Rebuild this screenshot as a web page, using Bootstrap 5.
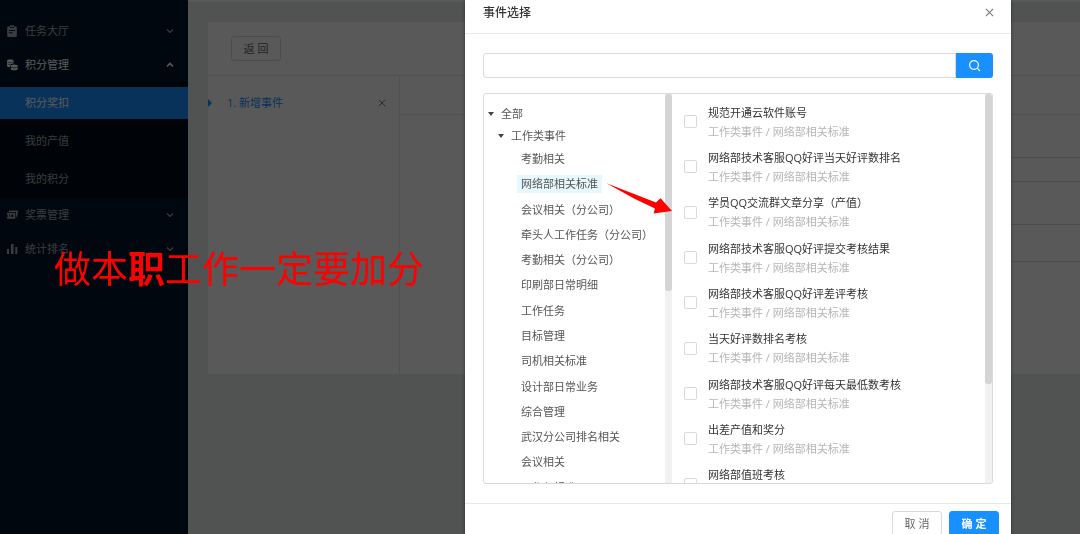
<!DOCTYPE html>
<html lang="zh-CN">
<head>
<meta charset="utf-8">
<meta name="viewport" content="width=device-width, initial-scale=1">
<title>事件选择</title>
<link href="https://cdn.jsdelivr.net/npm/bootstrap@5.3.0/dist/css/bootstrap.min.css" rel="stylesheet">
<style>
body{font:11px/18px "Open Sans","Noto Sans CJK SC",sans-serif;background:#e8eeeb;color:#555;overflow:hidden}
a{text-decoration:none;color:inherit}
.side{width:188px;background:#001529;color:rgba(255,255,255,.65);padding-top:14px}
.side svg{width:12px;height:12px}
.side a.top-item{height:34px;padding:0 13px 0 6px}
.side a.top-item .label-text{margin-left:7px}
.side a.top-item svg:last-child{width:10px;height:10px}
.side a.opened{color:#fff}
.subs{background:#000c17;padding:5px 0 3px}
.subs a{height:32px;padding-left:25px;margin-bottom:6px}
.subs a:last-child{margin-bottom:0}
.subs a.chosen{background:#1890ff;color:#fff}
.strip{height:2px;background:#fff}
.sheet{margin:20px 0 0 20px;background:#fff;min-height:352px}
.sheet-head{height:54px;padding:14px 23px;border-bottom:1px solid #e8e8e8}
.btn-plain,.btn-main{font-size:11px;line-height:16px;width:50px;height:25px;padding:0;border-radius:3px}
.btn-plain{border:1px solid #d9d9d9;color:#666;background:#fff}
.btn-main{background:#1890ff;border:1px solid #1890ff;color:#fff;font-weight:700}
.events{width:192px;border-right:1px solid #e8e8e8;padding-top:18px}
.events .entry{color:#1890ff;height:18px;padding-right:13px}
.mark-tri{width:0;height:0;border:4px solid transparent;border-left-color:#1890ff;border-right:0;margin-right:15px}
.x-btn{border:0;background:none;padding:0;line-height:0;color:#777}
.detail-tabs{height:39px;border-bottom:1px solid #e8e8e8}
.lines{margin-left:80px}
.lines div{border-bottom:1px solid #ddd;height:43px}
.lines div:nth-child(2){height:24px}
.lines div:nth-child(4){height:37px}
.shade{position:fixed;inset:0;background:rgba(0,0,0,.65)}
.pop-wrap{position:fixed;inset:0;padding:0 69px 0 465px}
.pop{background:#fff;box-shadow:0 0 4px rgba(0,0,0,.4);min-height:100%}
.pop-head{height:34px;padding:0 17px 8px 18px;border-bottom:1px solid #e8e8e8}
.pop-head h1{font-size:12px;line-height:18px;color:#333;font-weight:500;margin:0}
.pop-body{padding:19px 18px 19px}
.search input{height:25px;border:1px solid #d9d9d9;border-radius:3px 0 0 3px;padding:0 8px;font-size:11px;min-height:0}
.search button{width:37px;flex:none;height:25px;padding:0;background:#1890ff;color:#fff;border:0;border-radius:0 3px 3px 0;line-height:0}
.picker{margin-top:15px;height:391px;border:1px solid #d9d9d9;border-radius:3px;overflow:hidden}
.tree{width:181px;padding-top:9px;overflow:hidden}
.tree ul{list-style:none;margin:0;padding:3px 0 0}
.branch{height:22px}
.branch::before{content:"";border:3px solid transparent;border-top:4px solid #444;border-bottom:0;margin-right:7px}
.lv0{padding-left:4px}
.lv1{padding-left:14px}
.leaves{display:grid;grid-auto-rows:1fr;height:357px}
.leaves li{padding-left:33px}
.leaves a{padding:0 4px;display:inline-block}
.leaves a.chosen{background:#e6f7ff}
.bar{width:7px;background:#f1f1f1}
.bar div{background:#d5d5d5;border-radius:3px}
.bar .short{height:197px}
.bar .long{height:290px}
.picks{overflow:hidden;padding:5px 0 0 12px}
.picks-in{display:grid;grid-auto-rows:1fr;height:408px}
.picks label{line-height:19px}
.picks .form-check-input{width:13px;height:13px;margin:0 11px 0 0;border:1px solid #d9d9d9;border-radius:2px;flex:none}
.picks b{display:block;font-weight:400;color:#333}
.picks small{display:block;font-size:11px;color:#b5b5b5}
.pop-foot{border-top:1px solid #e8e8e8;padding:7px 12px;gap:7px}
.note{position:fixed;left:54px;top:245px;font:400 37px/44px "Noto Sans CJK SC",sans-serif;color:#f00;white-space:nowrap;margin:0}
.note strong{font-weight:700}
.pointer{position:fixed;left:600px;top:178px;width:80px;height:42px;pointer-events:none}
</style>
<script src="https://cdn.jsdelivr.net/npm/bootstrap@5.3.0/dist/js/bootstrap.bundle.min.js"></script>
</head>
<body>
<svg class="d-none">
<symbol id="down" viewBox="0 0 10 10"><path d="M2 3.5l3 3 3-3" fill="none" stroke="currentColor" stroke-width="1.2"/></symbol>
<symbol id="up" viewBox="0 0 10 10"><path d="M2 6.5l3-3 3 3" fill="none" stroke="currentColor" stroke-width="1.6"/></symbol>
<symbol id="cross" viewBox="0 0 10 10"><path d="M1 1l8 8M9 1l-8 8" fill="none" stroke="currentColor" stroke-width="1.2"/></symbol>
</svg>
<div class="d-flex min-vh-100">
<nav class="side flex-shrink-0">
<a href="#" class="top-item d-flex align-items-center"><svg viewBox="0 0 12 12"><path fill="currentColor" fill-rule="evenodd" d="M2 1.500h2V.3h4v1.200h2a.8.8 0 0 1 .8.8v8.900a.8.8 0 0 1-.8.8H2a.8.8 0 0 1-.8-.8V2.300a.8.8 0 0 1 .8-.8zM4 2v.8h4V2zM3 5v.9h6V5zm0 2.300v.9h3.500v-.9z"/></svg><span class="label-text flex-grow-1">任务大厅</span><svg><use href="#down"/></svg></a>
<a href="#" class="top-item opened d-flex align-items-center"><svg viewBox="0 0 12 12"><path fill="currentColor" d="M1 1.500C1 .3 7.500.3 7.500 1.500V4.500C5 4.600 4 6 4 8.200 2 8.200 1 7.700 1 7z"/><ellipse cx="8.300" cy="7" rx="3.500" ry="1.600" fill="currentColor"/><path fill="currentColor" d="M4.800 8.300c1.500 1.400 5.500 1.400 7 0v1.500c0 2-7 2-7 0z"/><path d="M1.500 3c2 .8 3.500.8 5.500 0M1.500 5c1 .5 2 .5 3 .3" stroke="#001529" stroke-width=".6" fill="none"/></svg><span class="label-text flex-grow-1">积分管理</span><svg><use href="#up"/></svg></a>
<div class="subs">
<a href="#" class="chosen d-flex align-items-center">积分奖扣</a>
<a href="#" class="d-flex align-items-center">我的产值</a>
<a href="#" class="d-flex align-items-center">我的积分</a>
</div>
<a href="#" class="top-item d-flex align-items-center"><svg viewBox="0 0 12 12"><path fill="currentColor" fill-rule="evenodd" d="M3 1.500h9l-.8 6.200H10V3H2.800zM1 3.700h8.300v6H1V8a1 1 0 0 0 0-2zM3 5v3.500h.7V5zm2.300.5v2.500h2V5.500z"/></svg><span class="label-text flex-grow-1">奖票管理</span><svg><use href="#down"/></svg></a>
<a href="#" class="top-item d-flex align-items-center"><svg viewBox="0 0 12 12"><path fill="currentColor" d="M1 6h2v5H1zM5 1h2.500v10H5zM9.300 4h2v7h-2z"/></svg><span class="label-text flex-grow-1">统计排名</span><svg><use href="#down"/></svg></a>
</nav>
<main class="flex-grow-1">
<div class="strip"></div>
<section class="sheet d-flex flex-column">
<div class="sheet-head"><button class="btn btn-plain" type="button">返 回</button></div>
<div class="d-flex flex-grow-1">
<div class="events"><div class="entry d-flex align-items-center"><span class="mark-tri"></span><a href="#" class="flex-grow-1">1. 新增事件</a><button class="x-btn" type="button" aria-label="删除"><svg width="8" height="8"><use href="#cross"/></svg></button></div></div>
<div class="flex-grow-1"><div class="detail-tabs"></div><div class="lines"><div></div><div></div><div></div><div></div></div></div>
</div>
</section>
</main>
</div>
<div class="shade"></div>
<div class="pop-wrap">
<div class="pop" role="dialog" aria-labelledby="pop-title">
<div class="pop-head d-flex align-items-center justify-content-between"><h1 id="pop-title">事件选择</h1><button class="x-btn" type="button" aria-label="关闭"><svg width="9" height="9"><use href="#cross"/></svg></button></div>
<div class="pop-body">
<form class="search d-flex"><input class="form-control" type="text" aria-label="搜索事件"><button type="button" aria-label="搜索"><svg width="13" height="13" viewBox="0 0 13 13"><g fill="none" stroke="currentColor" stroke-width="1.200"><circle cx="6" cy="6" r="4.400"/><path d="M9.200 9.200l2.800 2.800"/></g></svg></button></form>
<div class="picker d-flex">
<div class="tree">
<div class="branch lv0 d-flex align-items-center">全部</div>
<div class="branch lv1 d-flex align-items-center">工作类事件</div>
<ul class="leaves">
<li><a href="#">考勤相关</a></li>
<li><a href="#" class="chosen">网络部相关标准</a></li>
<li><a href="#">会议相关（分公司）</a></li>
<li><a href="#">牵头人工作任务（分公司）</a></li>
<li><a href="#">考勤相关（分公司）</a></li>
<li><a href="#">印刷部日常明细</a></li>
<li><a href="#">工作任务</a></li>
<li><a href="#">目标管理</a></li>
<li><a href="#">司机相关标准</a></li>
<li><a href="#">设计部日常业务</a></li>
<li><a href="#">综合管理</a></li>
<li><a href="#">武汉分公司排名相关</a></li>
<li><a href="#">会议相关</a></li>
<li><a href="#">工作部标准</a></li>
</ul>
</div>
<div class="bar flex-shrink-0"><div class="short"></div></div>
<div class="picks flex-grow-1"><div class="picks-in">
<label class="d-flex align-items-center"><input class="form-check-input" type="checkbox"><span><b>规范开通云软件账号</b><small>工作类事件 / 网络部相关标准</small></span></label>
<label class="d-flex align-items-center"><input class="form-check-input" type="checkbox"><span><b>网络部技术客服QQ好评当天好评数排名</b><small>工作类事件 / 网络部相关标准</small></span></label>
<label class="d-flex align-items-center"><input class="form-check-input" type="checkbox"><span><b>学员QQ交流群文章分享（产值）</b><small>工作类事件 / 网络部相关标准</small></span></label>
<label class="d-flex align-items-center"><input class="form-check-input" type="checkbox"><span><b>网络部技术客服QQ好评提交考核结果</b><small>工作类事件 / 网络部相关标准</small></span></label>
<label class="d-flex align-items-center"><input class="form-check-input" type="checkbox"><span><b>网络部技术客服QQ好评差评考核</b><small>工作类事件 / 网络部相关标准</small></span></label>
<label class="d-flex align-items-center"><input class="form-check-input" type="checkbox"><span><b>当天好评数排名考核</b><small>工作类事件 / 网络部相关标准</small></span></label>
<label class="d-flex align-items-center"><input class="form-check-input" type="checkbox"><span><b>网络部技术客服QQ好评每天最低数考核</b><small>工作类事件 / 网络部相关标准</small></span></label>
<label class="d-flex align-items-center"><input class="form-check-input" type="checkbox"><span><b>出差产值和奖分</b><small>工作类事件 / 网络部相关标准</small></span></label>
<label class="d-flex align-items-center"><input class="form-check-input" type="checkbox"><span><b>网络部值班考核</b><small>工作类事件 / 网络部相关标准</small></span></label>
</div></div>
<div class="bar flex-shrink-0"><div class="long"></div></div>
</div>
</div>
<div class="pop-foot d-flex justify-content-end"><button class="btn btn-plain" type="button">取 消</button><button class="btn btn-main" type="button">确 定</button></div>
</div>
</div>
<p class="note">做本<strong>职</strong>工作一定要加分</p>
<svg class="pointer" viewBox="0 0 80 42"><path fill="#f00" d="M6.500 5.200L56 24.500l4.500-4.200L72 33l-18.500 2.500 1.500-5L34 20.500z"/></svg>
</body>
</html>
